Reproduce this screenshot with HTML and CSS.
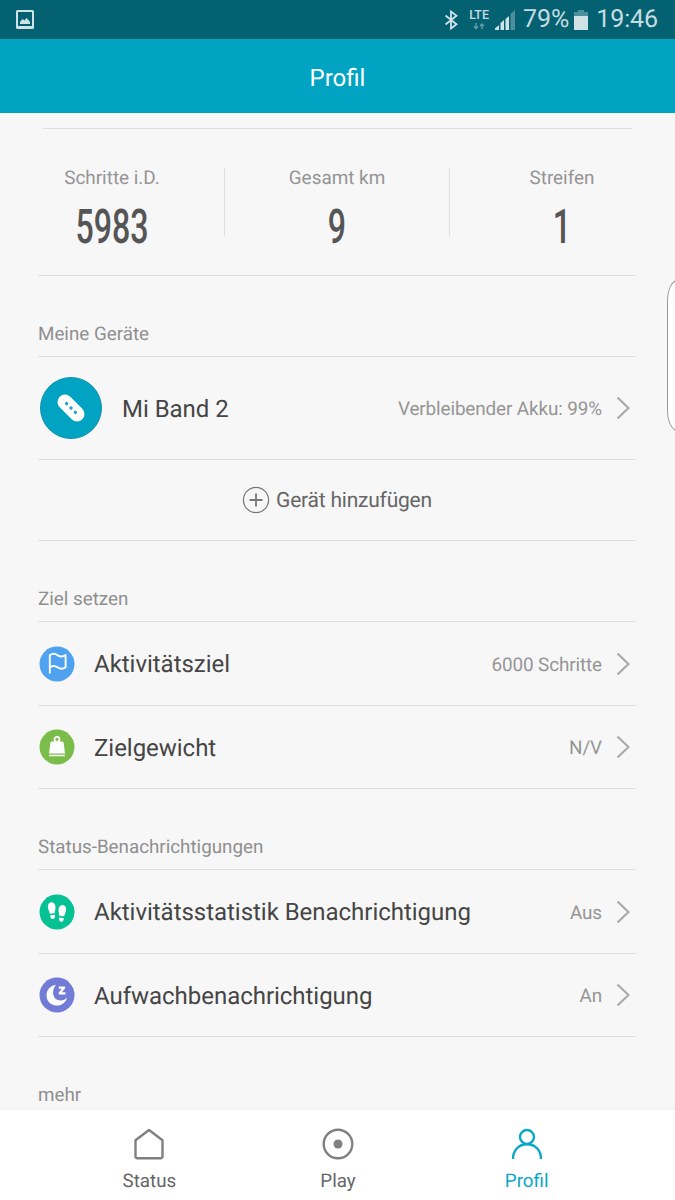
FILE: index.html
```html
<!DOCTYPE html>
<html lang="de">
<head>
    <meta charset="UTF-8">
    <meta name="viewport" content="width=device-width, initial-scale=1.0">
    <title>Profil</title>
    <link rel="stylesheet" href="styles.css">
</head>
<body>
    <div class="statusbar">
        <svg class="icon-picture" width="18" height="20" viewBox="0 0 18 20">
            <path fill-rule="evenodd" d="M1.500 0h15A1.500 1.500 0 0 1 18 1.500v16a1.500 1.500 0 0 1-1.500 1.500h-15A1.500 1.500 0 0 1 0 17.500v-16A1.500 1.500 0 0 1 1.500 0zM2 2v14h14V2z"/>
            <path d="M4 14v-2l2.500-3 2 1.500L10.500 8l1.500 1.500 2 2.500v2z"/>
        </svg>
        <div class="indicators">
            <svg class="icon-bluetooth" width="14" height="20" viewBox="0 0 14 20">
                <path d="M1.500 5.500l11 8.700-5.500 4.300v-17L12.500 5.800 1.500 14.500"/>
            </svg>
            <div class="lte">
                <span>LTE</span>
                <svg width="12" height="7" viewBox="0 0 12 7">
                    <path d="M3 0v5M1 3.500L3 5.500l2-2M9 6V1M7 3l2-2 2 2"/>
                </svg>
            </div>
            <svg class="icon-signal" width="20" height="20" viewBox="0 0 20 20">
                <path d="M0 20v-1.500L4 15v5zM5.500 20v-7L9 10v10zM10.500 20V9L14 6v14z"/>
                <path class="weak" d="M15.500 20V4L20 0v20z"/>
            </svg>
            <span class="percent">79%</span>
            <svg class="icon-battery" width="14" height="20" viewBox="0 0 14 20">
                <path class="weak" d="M0 2h4V0h6v2h4v4H0z"/>
                <path d="M0 6h14v14H0z"/>
            </svg>
            <span class="time">19:46</span>
        </div>
    </div>

    <header class="header">
        <h1>Profil</h1>
    </header>

    <main class="content">
        <div class="stats">
            <div class="stat">
                <div class="stat-label">Schritte i.D.</div>
                <div class="stat-value">5983</div>
            </div>
            <div class="stat">
                <div class="stat-label">Gesamt km</div>
                <div class="stat-value">9</div>
            </div>
            <div class="stat">
                <div class="stat-label">Streifen</div>
                <div class="stat-value">1</div>
            </div>
        </div>

        <h2>Meine Geräte</h2>
        <div class="row device">
            <svg class="row-icon" width="62" height="62" viewBox="0 0 62 62">
                <circle cx="31" cy="31" r="30.500" fill="#00a4c2" stroke="#1793ab"/>
                <g transform="rotate(45 31 31)">
                    <rect x="15" y="23.500" width="32" height="15" rx="7.500" fill="#fff"/>
                    <circle cx="24.800" cy="31" r="1.700" fill="#2b9fd0"/>
                    <circle cx="31" cy="31" r="1.700" fill="#2b9fd0"/>
                    <circle cx="37.200" cy="31" r="1.700" fill="#2b9fd0"/>
                </g>
            </svg>
            <span class="name">Mi Band 2</span>
            <span class="value">Verbleibender Akku: 99%</span>
            <svg class="chevron" width="14" height="24" viewBox="0 0 14 24"><path d="M1.500 1.500L12.500 12l-11 10.500"/></svg>
        </div>
        <div class="add-device">
            <svg width="28" height="28" viewBox="0 0 28 28">
                <circle cx="14" cy="14" r="12.600"/>
                <path d="M14 7.500v13M7.500 14h13" stroke-width="1.800"/>
            </svg>
            <span>Gerät hinzufügen</span>
        </div>

        <h2>Ziel setzen</h2>
        <div class="row">
            <svg class="row-icon" width="36" height="36" viewBox="0 0 36 36">
                <circle cx="18" cy="18" r="17.500" fill="#4ea2f0"/>
                <path d="M10.800 26.800V9.300C13.500 7.300 16 7.400 18.500 9.200S23.500 11.200 26.600 9v12.300c-3.100 2.200-5.600 1.800-8.100 0s-5-1.900-7.700.1" fill="none" stroke="#fff" stroke-width="1.900" stroke-linecap="round" stroke-linejoin="round"/>
            </svg>
            <span class="name">Aktivitätsziel</span>
            <span class="value">6000 Schritte</span>
            <svg class="chevron" width="14" height="24" viewBox="0 0 14 24"><path d="M1.500 1.500L12.500 12l-11 10.500"/></svg>
        </div>
        <div class="row">
            <svg class="row-icon" width="36" height="36" viewBox="0 0 36 36">
                <circle cx="18" cy="18" r="17.500" fill="#7bbd4b"/>
                <circle cx="18" cy="10.300" r="2.500" fill="none" stroke="#fff" stroke-width="1.700"/>
                <path d="M12.800 12.500h10.400q1.200 0 1.400 1.200l1.400 10.800H10l1.400-10.800q.2-1.200 1.400-1.200zM10 25.700h16v1.600H10z" fill="#fff"/>
            </svg>
            <span class="name">Zielgewicht</span>
            <span class="value">N/V</span>
            <svg class="chevron" width="14" height="24" viewBox="0 0 14 24"><path d="M1.500 1.500L12.500 12l-11 10.500"/></svg>
        </div>

        <h2>Status-Benachrichtigungen</h2>
        <div class="row">
            <svg class="row-icon" width="36" height="36" viewBox="0 0 36 36">
                <circle cx="18" cy="18" r="17.500" fill="#06c194"/>
                <g fill="#fff">
                    <path d="M12.500 8.300c2.600 0 4 2.300 4 5.200 0 2.200-.7 3.500-.8 5.800l-4.900.4c-.2-2.300-1.900-4-1.900-6.900 0-2.600 1.400-4.500 3.600-4.500zM11.200 21.200l4.700-.4c.4 2.500-.3 4-2 4.200-1.900.1-2.700-1.300-2.700-3.800z"/>
                    <path d="M23.500 11c-2.600 0-4 2.300-4 5.200 0 2.200.7 3.500.8 5.600l4.900.5c.2-2.300 1.900-4 1.900-6.900 0-2.600-1.400-4.400-3.600-4.400zM24.800 24l-4.700-.5c-.4 2.500.3 4 2 4.200 1.900.1 2.700-1.200 2.700-3.700z"/>
                </g>
            </svg>
            <span class="name">Aktivitätsstatistik Benachrichtigung</span>
            <span class="value">Aus</span>
            <svg class="chevron" width="14" height="24" viewBox="0 0 14 24"><path d="M1.500 1.500L12.500 12l-11 10.500"/></svg>
        </div>
        <div class="row">
            <svg class="row-icon" width="36" height="36" viewBox="0 0 36 36">
                <circle cx="18" cy="18" r="17.500" fill="#727cd6"/>
                <path d="M17 7.800C11.500 8.500 7.500 12.800 7.500 18.300c0 6 4.600 10.300 10.300 10.300 5.200 0 9.200-3.500 10.400-8.400-1.800 2.200-4 3.200-6.500 3.200-4.500 0-7.600-3.100-7.600-7.500 0-3.300 1.200-6.100 2.900-8.100z" fill="#fff"/>
                <path d="M19.800 10.600h5.400l-4.600 5.700h5.900" fill="none" stroke="#fff" stroke-width="2.200" stroke-linejoin="round"/>
            </svg>
            <span class="name">Aufwachbenachrichtigung</span>
            <span class="value">An</span>
            <svg class="chevron" width="14" height="24" viewBox="0 0 14 24"><path d="M1.500 1.500L12.500 12l-11 10.500"/></svg>
        </div>

        <h2>mehr</h2>
    </main>

    <nav class="tabs">
        <a class="tab">
            <svg width="32" height="32" viewBox="0 0 32 32"><path d="M2.500 12.200L16 2l13.500 10.200v16.300a1.800 1.800 0 0 1-1.800 1.800H4.300a1.800 1.800 0 0 1-1.800-1.800z"/></svg>
            <span>Status</span>
        </a>
        <a class="tab">
            <svg width="32" height="32" viewBox="0 0 32 32"><circle cx="16" cy="16" r="14.300"/><circle class="dot" cx="16" cy="16" r="4.500"/></svg>
            <span>Play</span>
        </a>
        <a class="tab active">
            <svg width="32" height="32" viewBox="0 0 32 32"><circle cx="16" cy="9" r="7"/><path d="M2 31C2 22 8 16.300 16 16.300S30 22 30 31"/></svg>
            <span>Profil</span>
        </a>
    </nav>

    <div class="edge-handle"></div>
</body>
</html>
```

FILE: styles.css
```css
* {
    margin: 0;
    padding: 0;
    box-sizing: border-box;
}

body {
    display: flex;
    flex-direction: column;
    height: 1200px;
    background: #f7f7f7;
    font-family: Roboto, sans-serif;
    color: #454545;
    text-rendering: geometricPrecision;
    overflow: hidden;
    position: relative;
}

svg {
    display: block;
    flex-shrink: 0;
}

.statusbar {
    display: flex;
    justify-content: space-between;
    flex-shrink: 0;
    height: 39px;
    padding: 0 17px 0 16px;
    background: #036172;
    color: #c5dce1;
    fill: #cfe3e7;
}

.icon-picture {
    margin-top: 10px;
}

.indicators {
    display: flex;
    align-items: center;
}

.icon-bluetooth {
    margin-right: 10px;
    fill: none;
    stroke: #cfe3e7;
    stroke-width: 1.8;
}

.lte {
    display: flex;
    flex-direction: column;
    align-items: center;
    width: 22px;
    margin-right: 5px;
    font-size: 12.5px;
    font-weight: 500;
    line-height: 12px;
}

.lte svg {
    margin-top: 1px;
    fill: none;
    stroke: #63a0ab;
    stroke-width: 1.4;
}

.icon-signal {
    margin-right: 8px;
}

.weak {
    fill: #4b909c;
}

.percent,
.time {
    font-size: 25px;
    line-height: 41px;
    letter-spacing: -0.1px;
}

.percent {
    margin-right: 5px;
}

.icon-battery {
    margin-right: 8px;
}

.header {
    flex-shrink: 0;
    height: 74px;
    background: #00a4c2;
    text-align: center;
}

.header h1 {
    font-size: 24px;
    font-weight: 400;
    line-height: 78px;
    color: #fff;
}

.content {
    flex: 1;
    min-height: 0;
    padding: 15px 39px 0 38px;
    overflow: hidden;
}

.stats {
    display: flex;
    height: 148px;
    margin: 0 -39px 0 -38px;
    padding-top: 40px;
    background: linear-gradient(#e0e0e0, #e0e0e0) 43px 0 / 589px 1px no-repeat,
                linear-gradient(#e0e0e0, #e0e0e0) 38px 147px / 598px 1px no-repeat;
}

.stat {
    flex: 1;
    height: 68px;
    border-right: 1px solid #e0e0e0;
    text-align: center;
}

.stat:last-child {
    border-right-color: transparent;
}

.stat-label {
    font-size: 18.9px;
    line-height: 19px;
    color: #959595;
}

.stat-value {
    margin-top: 16px;
    font-size: 48px;
    font-weight: 500;
    line-height: 48px;
    color: #555;
    transform: scaleX(0.67);
}

.content h2 {
    height: 81px;
    padding-top: 46px;
    border-bottom: 1px solid #e0e0e0;
    font-size: 18.8px;
    font-weight: 400;
    line-height: 24px;
    color: #8f8f8f;
}

.row {
    display: flex;
    align-items: center;
    height: 83px;
    padding-right: 6px;
    border-bottom: 1px solid #e0e0e0;
}

h2 + .row {
    height: 84px;
}

h2 + .device {
    height: 103px;
    padding-left: 2px;
}

.row-icon {
    margin-left: 1px;
    margin-right: 19px;
}

.device .row-icon {
    margin-left: 0;
    margin-right: 20px;
    margin-bottom: 1px;
}

.name {
    flex: 1;
    padding-top: 1px;
    font-size: 24px;
    line-height: 28px;
    letter-spacing: -0.03px;
    white-space: nowrap;
}

.value {
    margin-right: 14px;
    padding-top: 1px;
    font-size: 18.9px;
    letter-spacing: -0.12px;
    color: #959595;
}

.chevron {
    fill: none;
    stroke: #aaa;
    stroke-width: 2.2;
}

.add-device {
    display: flex;
    align-items: center;
    justify-content: center;
    gap: 6px;
    height: 81px;
    border-bottom: 1px solid #e0e0e0;
    font-size: 21px;
    letter-spacing: -0.22px;
    color: #666;
}

.add-device span {
    padding-top: 2px;
}

.add-device svg {
    fill: none;
    stroke: #777;
    stroke-width: 1.2;
}

.tabs {
    display: flex;
    flex-shrink: 0;
    height: 91px;
    padding: 0 54px 0 55px;
    border-top: 1px solid #f2f2f2;
    background: #fff;
}

.tab {
    display: flex;
    flex: 1;
    flex-direction: column;
    align-items: center;
    padding-top: 18px;
    font-size: 18.8px;
    line-height: 24px;
    color: #666;
}

.tab svg {
    margin-bottom: 9px;
    fill: none;
    stroke: #808080;
    stroke-width: 2.4;
    stroke-linejoin: round;
}

.tab .dot {
    fill: #808080;
    stroke: none;
}

.tab.active {
    color: #0aa8c7;
}

.tab.active svg {
    stroke: #0aa8c7;
}

/* edge panel handle, runs off the right side */
.edge-handle {
    position: absolute;
    top: 280px;
    right: -13px;
    width: 21px;
    height: 151px;
    border: 1px solid #999;
    border-radius: 12px / 24px;
    background: #fff;
}
```
